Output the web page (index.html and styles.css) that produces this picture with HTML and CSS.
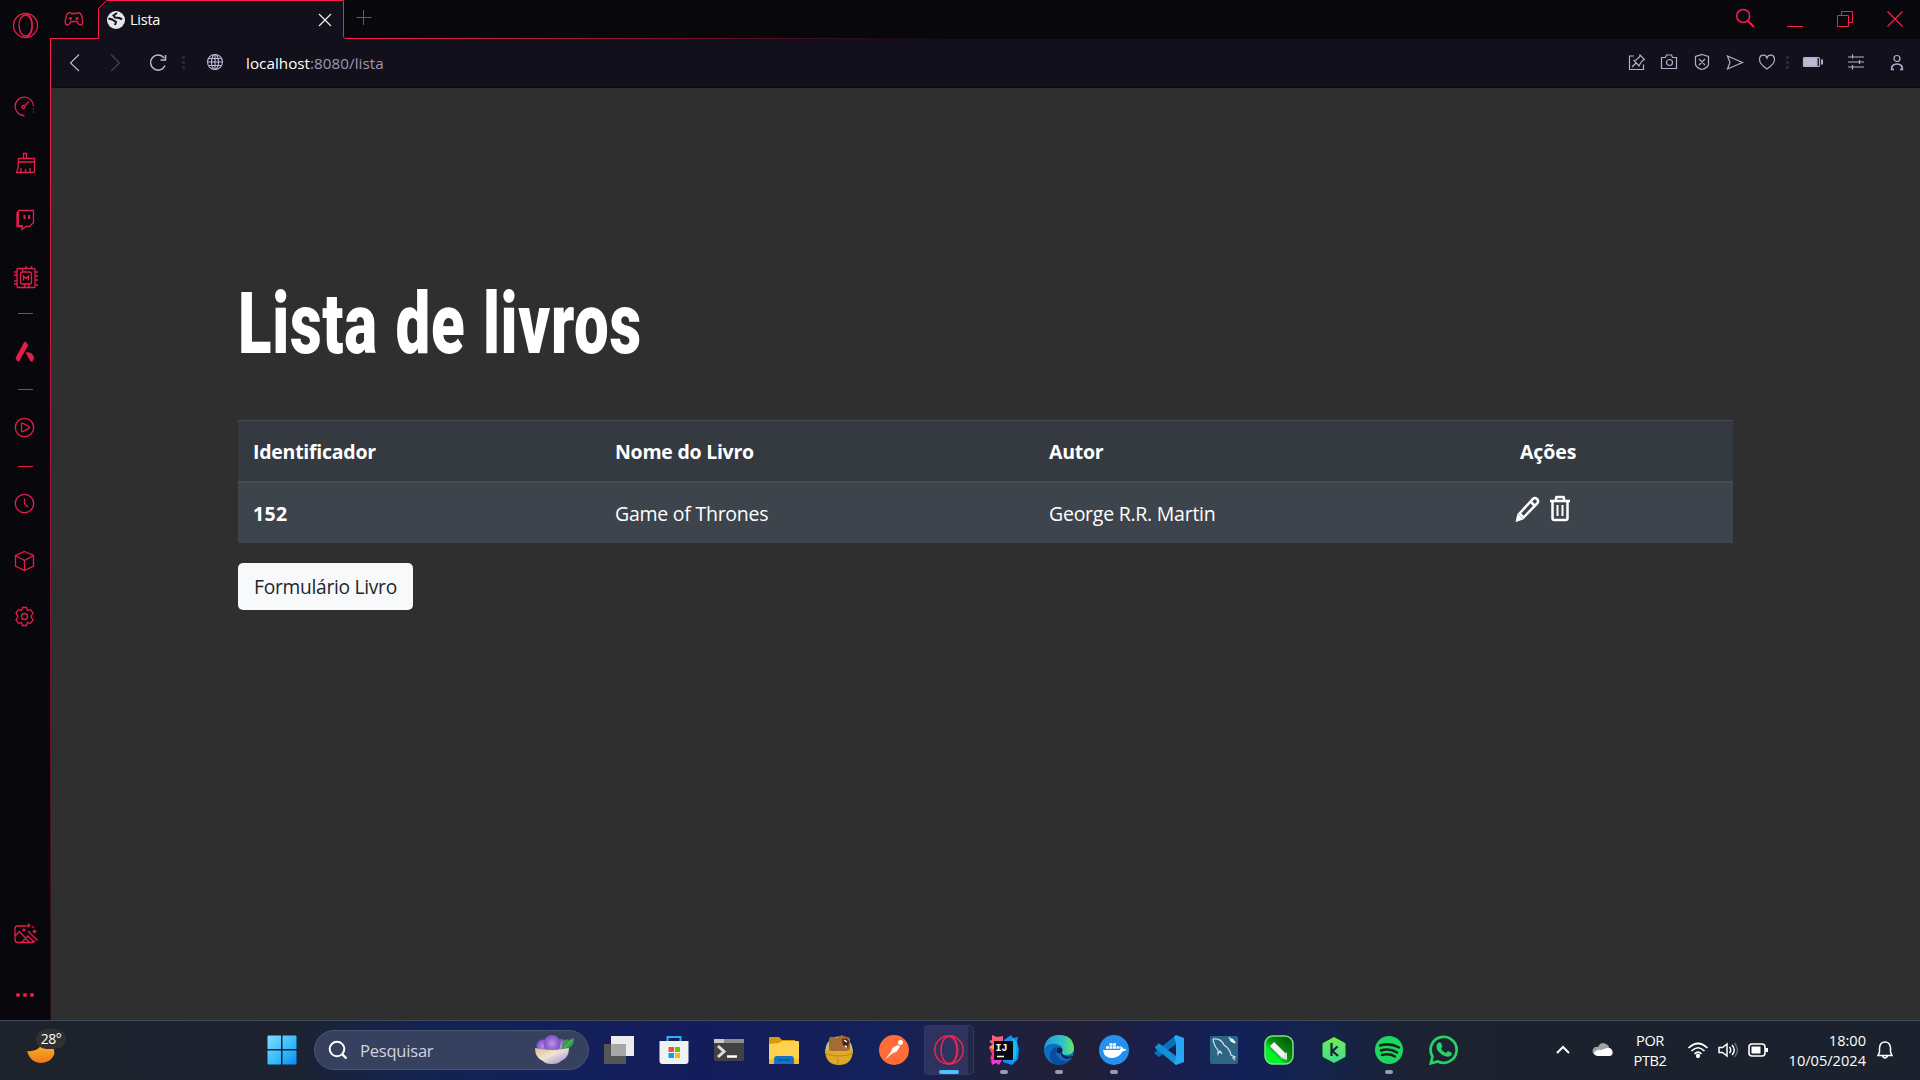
FILE: index.html
```html
<!DOCTYPE html>
<html lang="pt-BR">
<head>
<meta charset="utf-8">
<title>Lista</title>
<link rel="stylesheet" href="styles.css">
</head>
<body>
<div class="browser">
  <aside class="sidebar">
    <svg class="s-opera" viewBox="0 0 30 30"><circle cx="15.500" cy="15.500" r="12"/><ellipse cx="15.500" cy="15.500" rx="6.500" ry="10.500"/><path d="M17 4c7 3 7 20 0 23"/></svg>
    <svg class="s-speed" viewBox="0 0 30 30"><path d="M14.500 23.500A9.200 9.200 0 1 1 23.500 14"/><circle cx="13.500" cy="15" r="1.500"/><path d="M15 13.500l4-4M23.500 16.500v1M23.500 19.500v1"/></svg>
    <svg class="s-brush" viewBox="0 0 30 30"><path d="M13.500 9V4.500h3V9M8.500 9.500h16v13l-1 1h-17c2-4 2-7 2-14zM8.500 13h16M11 23v-4M15.500 23v-3M20 23v-4"/></svg>
    <svg class="s-twitch" viewBox="0 0 30 30"><path d="M7 9l2-2.500h14.500v12l-4 4H16l-4 3v-3H7z"/><path class="thick" d="M8 8v14h5M14.500 11v4M19 11v4"/></svg>
    <svg class="s-chip" viewBox="0 0 30 30"><rect x="7" y="6.500" width="18" height="19" rx="1"/><rect x="10.500" y="10" width="11" height="12" rx="2"/><path d="M13.500 18.500v-4.500l2.500 2.500 2.500-2.500v4.500M12.500 10V6.500M14.500 22v3M19 22v3M16 4v2M21.500 4v2M4 10h3M4 13h3M4 19h3M4 22h3M25 10h3M25 14h3M25 18h3M25 23h3"/></svg>
    <i class="dash d1"></i>
    <svg class="s-amd solid" viewBox="0 0 30 30"><path d="M14 5.500c.7-1 2-1 2.600 0l1.500 3L10 23c-.8 2-2.300 2-3.200.5L5.500 21zM15.500 15.500c5-1.500 8 2 8.800 5.500l-1.500 3c-.8 1.200-1.700 1-2.500 0z"/></svg>
    <i class="dash d2"></i>
    <svg class="s-play" viewBox="0 0 30 30"><circle cx="14.500" cy="15.500" r="9.200"/><path d="M11.500 12.200q0-1.500 1.500-.9l6 3.300q1 .9 0 1.800l-6 3.200q-1.500.4-1.500-1z"/></svg>
    <i class="dash d3"></i>
    <svg class="s-clock" viewBox="0 0 30 30"><circle cx="14.500" cy="15.500" r="9.200"/><path d="M14.500 10.500v5l3.500 3.500"/></svg>
    <svg class="s-cube" viewBox="0 0 30 30"><path d="M14.500 5.500l9 4v10.500l-9 4.500-9-4.500V9.500zM5.500 9.500l9 5 9-5M14.500 14.500v10"/></svg>
    <svg class="s-gear" viewBox="0 0 30 30"><circle cx="14.500" cy="15.500" r="3"/><path d="M12.500 6.500h4l1 3 3-.8 2.500 3.300-2 3.500 2 3.500-2.500 3.300-3-.8-1 3h-4l-1-3-3 .8L6 19l2-3.500L6 12l2.500-3.300 3 .8z"/></svg>
    <svg class="s-image" viewBox="0 0 30 30"><path d="M16 7H7.500Q5 7 5 9.500v11Q5 23.500 7.500 23.500h15q2 0 2-2M5 17l4.500-4.500 10 11M12 23l6-6 6 6M18 12l9.500 9.500M18.500 4.500v4M16.500 6.500h4M24.500 10.500v4M22.500 12.500h4M22 7.500l2 1"/><circle class="dot" cx="14" cy="11" r="1.600"/></svg>
    <svg class="s-more solid" viewBox="0 0 30 30"><circle cx="8" cy="15" r="2.100"/><circle cx="15" cy="15" r="2.100"/><circle cx="22" cy="15" r="2.100"/></svg>
  </aside>
  <div class="window">
    <header class="tabstrip">
      <svg class="pad" viewBox="0 0 24 24"><path d="M6.500 6q1-1 3 .5h5q2-1.500 3-.5 2 .5 3 6.500.8 5-1.500 5.500-2 .3-4-3.500H9Q7 18.300 5 18 2.700 17.500 3.500 12.500 4.500 6.500 6.500 6z"/><path d="M8.500 10v3M7 11.500h3M15 10v3M13.500 11.500h3"/></svg>
      <div class="tab">
        <svg class="fav" viewBox="0 0 18 18"><circle cx="9" cy="9" r="9" fill="#e4e6ec"/><path d="M10 2L6.500 4.500 8 6.500q5 0 7 2M1.500 7.500L5 8.500l4 2.500-1 3" fill="none" stroke="#14121b" stroke-width="2"/></svg>
        <span class="tab-title">Lista</span>
        <svg class="tab-close" viewBox="0 0 14 14"><path d="M1 1l12 12M13 1L1 13"/></svg>
      </div>
      <svg class="plus" viewBox="0 0 16 16"><path d="M.5 7.500h15M7.500 0v15"/></svg>
      <div class="controls">
        <svg viewBox="0 0 20 20"><circle cx="8.200" cy="8" r="6.500" stroke-width="1.500"/><path d="M13 13l6 6" stroke-width="1.800"/></svg>
        <svg viewBox="0 0 20 20"><path d="M2 18.500h16"/></svg>
        <svg viewBox="0 0 20 20"><path d="M2.500 7.500h11v11h-11zM6.500 7.500v-4h11v11h-4"/></svg>
        <svg viewBox="0 0 20 20"><path d="M2.500 3.500l15 15M17.500 3.500l-15 15" stroke-width="1.300"/></svg>
      </div>
    </header>
    <nav class="toolbar">
      <div class="nav-icons">
        <svg viewBox="0 0 20 20"><path d="M14 2.500L5.500 11l8.500 8"/></svg>
        <svg class="dim" viewBox="0 0 20 20"><path d="M6 2.500l8.500 8.500L6 19"/></svg>
        <svg class="reload" viewBox="0 0 20 20"><path d="M17 13.500a7.500 7.500 0 1 1-1-7.500M17.500 3v5h-5"/></svg>
        <i class="dots"></i>
        <svg viewBox="0 0 20 20"><circle cx="10" cy="10" r="7.500"/><ellipse cx="10" cy="10" rx="3.500" ry="7.500"/><path d="M3.500 6.500h13M3.500 13.500h13M2.500 10h15M10 2.500v15"/></svg>
      </div>
      <div class="url"><b>localhost</b>:8080/lista</div>
      <div class="tools">
        <svg viewBox="0 0 20 20"><path d="M7 4H2.500v13.500h14v-5M13 3l4.500 4.500-2 1-2.500 3.500-1 2-5-5.500 2-.5 3.500-3zM9 11l-4 4"/></svg>
        <svg viewBox="0 0 20 20"><path d="M2.500 5.500h4l1-2.500h5l1 2.500h4v11h-15z"/><circle cx="10.500" cy="10.500" r="3"/></svg>
        <svg viewBox="0 0 20 20"><path d="M10 2.500l6.500 2v8q-1 3.500-6.500 5-5.500-1.500-6.500-5v-8zM7 7l6 6M13 7l-6 6"/></svg>
        <svg viewBox="0 0 20 20"><path d="M2.500 4l15 6.500-15 6.500 2.500-6.500z"/></svg>
        <svg viewBox="0 0 20 20"><path d="M10 17Q2.500 12 2.500 7.500c0-5 6-6 7.500-1.500 1.500-4.500 7.500-3.500 7.500 1.500Q17.500 12 10 17z"/></svg>
        <i class="dots"></i>
        <svg class="wide" viewBox="0 0 24 20"><rect x="2.500" y="5.500" width="16" height="9" rx="1"/><path d="M3 6h13v8H3z" fill="#c1b8d8"/><path d="M21 7.500v5" stroke-width="2"/></svg>
        <svg viewBox="0 0 20 20"><path d="M2 5h16M2 10h16M2 15h16M6.500 2.500v4M13.500 8v4M6.500 13v4.500"/></svg>
        <svg viewBox="0 0 20 20"><circle cx="10" cy="6.500" r="3"/><path stroke-width="1.600" d="M4.500 17.500q0-5.500 5.500-5.500t5.500 5.500M4 17.500h3M13 17.500h3"/></svg>
      </div>
    </nav>
    <main class="page">
      <h1>Lista de livros</h1>
      <table class="books">
        <colgroup><col class="c-id"><col class="c-name"><col class="c-author"><col></colgroup>
        <thead><tr><th>Identificador</th><th>Nome do Livro</th><th>Autor</th><th class="act">Ações</th></tr></thead>
        <tbody><tr><th>152</th><td>Game of Thrones</td><td>George R.R. Martin</td>
          <td class="icons"><svg width="28" height="28" viewBox="0 0 28 28"><path d="M5.500 18.500L19 3.800q2-1.800 4 .2t.4 4.200L9.500 22.500zM16.500 6.500l4.500 4.500" fill="none" stroke="#fff" stroke-width="2.500"/><path d="M3.500 18.500l6 6L1.500 27z" fill="#fff"/></svg><svg width="22" height="28" viewBox="0 0 22 28"><path d="M1 6h20M3.500 6v17q0 2 2 2h11q2 0 2-2V6M7 6V3q0-1 1-1h6q1 0 1 1v3" fill="none" stroke="#fff" stroke-width="2.500"/><path d="M8.500 10v11M13.500 10v11" stroke="#fff" stroke-width="2"/></svg></td></tr></tbody>
      </table>
      <a class="button">Formulário Livro</a>
    </main>
  </div>
  <svg class="frame" width="1870" height="1020" viewBox="0 0 1870 1020">
    <defs>
      <linearGradient id="fx" gradientUnits="userSpaceOnUse" x1="0" y1="0" x2="900" y2="0"><stop offset=".35" stop-color="#fa1e4e"/><stop offset="1" stop-color="#fa1e4e" stop-opacity="0"/></linearGradient>
      <linearGradient id="fy" gradientUnits="userSpaceOnUse" x1="0" y1="38" x2="0" y2="1020"><stop offset="0" stop-color="#fa1e4e"/><stop offset=".3" stop-color="#fa1e4e" stop-opacity=".8"/><stop offset=".95" stop-color="#fa1e4e" stop-opacity=".15"/></linearGradient>
    </defs>
    <path d="M.5 38.500H48.500V8.500L56.500.5H293.500V37L295 38.500H900" fill="none" stroke="url(#fx)"/>
    <path d="M0 38h1v982H0z" fill="url(#fy)"/>
  </svg>
</div>
<footer class="taskbar">
  <div class="weather">
    <svg width="36" height="36" viewBox="0 0 36 36"><defs><linearGradient id="moon" x2="0" y2="1"><stop stop-color="#f8c52c"/><stop offset="1" stop-color="#f27818"/></linearGradient></defs><path d="M4 21q13 2 17-12 12 6 10 16Q27 33 17 33 7 32 4 21z" fill="url(#moon)"/></svg>
    <span>28°</span>
  </div>
  <svg class="start" width="30" height="30" viewBox="0 0 30 30"><defs><linearGradient id="win" x2="1" y2="1"><stop stop-color="#86dcfb"/><stop offset=".55" stop-color="#35bdfb"/><stop offset="1" stop-color="#058cf4"/></linearGradient></defs><path d="M1.500.5H14V14H.5V1.500q0-1 1-1zM15.500.5h13q1 0 1 1V14h-14zM.5 15.500H14v14H1.500q-1 0-1-1zM15.500 15.500h14v13q0 1-1 1h-13z" fill="url(#win)"/></svg>
  <div class="search">
    <svg width="20" height="20" viewBox="0 0 20 20"><circle cx="9" cy="9" r="7.300" fill="none" stroke="#fff" stroke-width="2"/><path d="M14 14l4.500 4.500" stroke="#fff" stroke-width="2.400"/></svg>
    <span>Pesquisar</span>
    <svg width="40" height="30" viewBox="0 0 40 30"><defs><linearGradient id="bowl" x2="1" y2="1"><stop stop-color="#d9bd8c"/><stop offset=".45" stop-color="#efe3d2"/><stop offset="1" stop-color="#9a83dd"/></linearGradient><radialGradient id="berry"><stop stop-color="#bb93e9"/><stop offset="1" stop-color="#7e50c0"/></radialGradient></defs><circle cx="8" cy="11" r="6.500" fill="url(#berry)"/><circle cx="26" cy="11" r="7" fill="url(#berry)"/><circle cx="17" cy="8.500" r="8.500" fill="url(#berry)"/><path d="M27 14q-1-9 6-10 0 8-6 10zM28 14q1-9 11-11 0 11-11 11z" fill="#3b9a4c"/><path d="M29 13l8-8" stroke="#6cc25e"/><path d="M0 13q17 4 34 0 0 10-8 13-2 3-9 3t-9-3Q0 23 0 13z" fill="url(#bowl)"/></svg>
  </div>
  <div class="apps">
    <span><svg viewBox="0 0 30 30"><path d="M0 9h22v20H0z" fill="#555653"/><path d="M7 1h23v20H7z" fill="#ececef"/><path d="M7 9h15v12H7z" fill="#a8a8aa"/></svg></span>
    <span><svg viewBox="0 0 30 30"><path d="M8.500 8V2h13v6" fill="none" stroke="#27b4f4" stroke-width="2"/><path d="M.5 6h29v20q0 3-3 3h-23q-3 0-3-3z" fill="#f1f2f4"/><path d="M9.500 12H15v5H9.500z" fill="#f25022"/><path d="M16 12h5v5h-5z" fill="#7fba00"/><path d="M9.500 18H15v5H9.500z" fill="#00a4ef"/><path d="M16 18h5v5h-5z" fill="#ffb900"/></svg></span>
    <span><svg viewBox="0 0 30 30"><rect x="0" y="4" width="30" height="22" rx="1.500" fill="#414243"/><path d="M0 4h30v4H0z" fill="#8d8d8e"/><path d="M0 4h10v4H0z" fill="#c9c9ca"/><path d="M4 11l6 5.500L4 22" fill="none" stroke="#ddd" stroke-width="3"/><path d="M13 21.500h10" stroke="#fff" stroke-width="2.500"/></svg></span>
    <span><svg viewBox="0 0 30 30"><path d="M0 3q0-1 1-1h9l3 3h13v8H0z" fill="#d99a08"/><path d="M0 9l10-1 3-2h16q1 0 1 1v22H0z" fill="#ffd151"/><path d="M0 24h30v5H0z" fill="#f5bd29"/><path d="M5 29v-5q0-3 3-3h14q3 0 3 3v5z" fill="#1475c4"/><path d="M9 25h12" stroke="#0a559b" stroke-width="1.500"/></svg></span>
    <span><svg viewBox="0 0 30 30"><circle cx="15" cy="15" r="13.500" fill="#b5c58c"/><path d="M5 16V5q0-4 4-3l4 1q3-4 7-2l6 2v13z" fill="#a66b32"/><path d="M18 4q6-2 7 3l-1 6-5-3z" fill="#4a211c"/><path d="M20 5l3 2M21 11l2 1" stroke="#fff" stroke-width="1.500"/><path d="M1 14q14 5 28 0 0 16-14 16T1 14z" fill="#dea927"/><path d="M2 19q13 4 26 0M14 23v6" stroke="#bd8417" fill="none"/></svg></span>
    <span><svg viewBox="0 0 30 30"><circle cx="15" cy="15" r="15" fill="#ff6c37"/><circle cx="21.500" cy="7.500" r="2.500" fill="#fff"/><path d="M19 10l2 1.500-3.500 5-4.500 2-6 5 5-6.500 1.500-4z" fill="#fff" stroke="#fbd5c7" stroke-width=".6"/></svg></span>
    <span class="active"><svg viewBox="0 0 30 30" fill="none" stroke="#e62750" stroke-width="1.500"><circle cx="15" cy="15" r="14.200"/><ellipse cx="15" cy="15" rx="8" ry="13.500"/><path d="M17 1.500c9 3 9 24 0 27"/></svg></span>
    <span class="run"><svg viewBox="0 0 30 30"><path d="M3 0l5 2 6-1v8H3l-3-3 3-1z" fill="#ff5a78"/><path d="M0 13l6-6v18l-5-1 2-5z" fill="#ff318c"/><path d="M0 12l6-4v7z" fill="#ffa23a"/><path d="M2 25l5-2 6 2-3 5-3-2-4 2z" fill="#e93fd0"/><path d="M15 5l7-5 2 3 5-1-1 5 2 7-1 10-6 6-9-3z" fill="#168cf5"/><path d="M23 3l5 4-1 16-4 4z" fill="#13c1ed"/><path d="M5 6h19v19H5z" fill="#090711"/><text x="6.500" y="15.500">IJ</text><path d="M8 21.500h7" stroke="#fff" stroke-width="1.500"/></svg></span>
    <span class="run"><svg viewBox="0 0 30 30"><defs><linearGradient id="ed" x2="1"><stop stop-color="#249cdd"/><stop offset=".6" stop-color="#2bc2ca"/><stop offset="1" stop-color="#6ce464"/></linearGradient></defs><circle cx="15" cy="15" r="15" fill="#116ebe"/><path d="M0 14Q2 0 15 0q14 0 15 13 0 7-8 7-5 0-4-3 2-7-6-8Q3 8 0 14z" fill="url(#ed)"/><path d="M12 14q-1 10 9 12 4 0 7-3-5 7-13 7-11-2-9-12 2-5 8-7z" fill="#0b4c9c"/><path d="M17 16q-1 6 5 8 3 0 7-2 0-1-1-1-3 1-6 0-4-1-5-5z" fill="#15205a"/><circle cx="15.500" cy="15.500" r="3" fill="#15204c"/></svg></span>
    <span class="run"><svg viewBox="0 0 30 30"><circle cx="15" cy="15" r="15" fill="#2391ed"/><path d="M4 15h17q1-2 0-4 3 1 3.500 3 1.500-.4 3 .3-1 2-4 2.200Q20 23 13 23 5 23 4 15z" fill="#fff"/><path d="M7 12.500h3M10.500 12.500h3M14 12.500h3M10.500 9.500h3M14 9.500h3M17.500 12.500h3" stroke="#fff" stroke-width="2.500"/></svg></span>
    <span><svg viewBox="0 0 30 30"><path d="M22 0v9L5 22l-4-3q-1-1 0-2z" fill="#0871b7"/><path d="M1 12l3-3q1-1 2 0l16 12v9L1 13z" fill="#168ed5"/><path d="M22 0l8 3v24l-8 3-2-2 2-5V8l-2-6z" fill="#29a7f3"/></svg></span>
    <span><svg viewBox="0 0 30 30"><rect x="1" y="1" width="28" height="28" rx="2" fill="#2d6585"/><path d="M4 4q8-1 11 6 6 4 7 10l4 2-2 1 2 2M4 4q1 7 5 11v4l2-3 2 3M20 2l2 4 4 2" fill="none" stroke="#d5e6ef" stroke-width="1.200"/><path d="M21 3l3 1 3 4-4-1z" fill="#fff"/></svg></span>
    <span><svg viewBox="0 0 30 30"><defs><linearGradient id="cg" x1="1" x2="0" y2="1"><stop stop-color="#004a00"/><stop offset=".5" stop-color="#089410"/><stop offset=".7" stop-color="#00f52f"/></linearGradient></defs><rect x="1" y="1" width="28" height="28" rx="8" fill="url(#cg)" stroke="#79e879" stroke-width="1.500"/><path d="M8 9l12 12" stroke="#f3f3f3" stroke-width="6"/><path d="M17 23l6 2V17z" fill="#ddd"/></svg></span>
    <span><svg viewBox="0 0 30 30"><defs><linearGradient id="kg" x2="0" y2="1"><stop stop-color="#71ed58"/><stop offset="1" stop-color="#3bdd93"/></linearGradient></defs><path d="M15 1.500l12 6.500v14l-12 6.500L3 22V8z" fill="url(#kg)" stroke="#142b25"/><path d="M12.500 8v13M18.500 11.500l-5 4.500 5.500 5" fill="none" stroke="#172130" stroke-width="2.200"/></svg></span>
    <span class="run"><svg viewBox="0 0 30 30"><circle cx="15" cy="15" r="14" fill="#1fd760"/><path d="M6 10.500q10-3 19 2M7 15.500q9-2.500 16 2M8 20q7-2 13 1.500" fill="none" stroke="#14251d" stroke-width="2.500" stroke-linecap="round"/></svg></span>
    <span><svg viewBox="0 0 30 30"><path d="M3.500 21.500A13 13 0 1 1 9 26.500L1.800 28.300z" fill="none" stroke="#25d366" stroke-width="2.700"/><path d="M9 8q2-1.500 3 0l1.500 3.500-1.500 2q1.500 3.500 5 4.500l2-2 3.500 1.500q1 2-1 3.500-3 2-8-1-6-4-6-8.500Q7.500 9 9 8z" fill="#25d366"/></svg></span>
  </div>
  <div class="tray">
    <svg width="20" height="20" viewBox="0 0 20 20"><path d="M4 13l6-6 6 6" fill="none" stroke="#fff" stroke-width="2"/></svg>
    <svg width="22" height="20" viewBox="0 0 22 20"><path d="M5 15Q0 13 2 9q2-3 5-2 3-6 8-3 3 1 3 4l-9 5z" fill="#9ea1a8"/><path d="M4 15q-3-2 1-4 2-2 5-1l6-2q3-1 5 2 2 5-2 6H6z" fill="#fff"/></svg>
    <div class="lang">POR<br>PTB2</div>
    <svg width="22" height="20" viewBox="0 0 22 20" fill="none" stroke="#fff" stroke-width="1.700"><path d="M1.500 8q9.500-9 19 0M4.500 11q6.500-6.500 13 0M7.500 14q3.500-3.500 7 0"/><circle cx="11" cy="16" r="1.300" fill="#fff"/></svg>
    <svg width="22" height="20" viewBox="0 0 22 20" fill="none" stroke="#fff" stroke-width="1.500"><path d="M2 7.500h3.500L10 4v12l-4.500-3.500H2zM12.500 7q2.500 3 0 6M15 5q4.500 5 0 10"/><path d="M17.500 3q6 7 0 14" stroke="#626772"/></svg>
    <svg width="22" height="20" viewBox="0 0 22 20"><rect x="2" y="4" width="16" height="12" rx="3" fill="none" stroke="#fff" stroke-width="1.600"/><path d="M4.500 6.500h9v7h-9zM18 8h3v4h-3z" fill="#fff"/></svg>
    <div class="clock">18:00<br>10/05/2024</div>
    <svg width="20" height="20" viewBox="0 0 20 20" fill="none" stroke="#fff" stroke-width="1.500"><path d="M4.500 12V8q.5-6 5.500-6t5.500 6v4l1.500 3.500H3zM7.500 16q2.500 4 5 0"/></svg>
  </div>
</footer>
</body>
</html>
```
FILE: styles.css
```css
* { box-sizing: border-box; }
body { margin: 0; width: 1920px; height: 1080px; overflow: hidden; display: flex; flex-direction: column; font-family: "Open Sans", "Noto Sans", sans-serif; background: #08080c; color: #fff; }
svg { display: block; flex: none; }
.browser { height: 1020px; display: flex; position: relative; }
.frame { position: absolute; left: 50px; top: 0; pointer-events: none; }

.sidebar { width: 51px; padding: 10px 0 10px 10px; display: flex; flex-direction: column; background: #08080c; }
.sidebar svg { width: 30px; height: 30px; fill: none; stroke: #e51d49; stroke-width: 1.3; }
.sidebar .solid, .sidebar .dot { fill: #e51d49; stroke: none; }
.sidebar .thick { stroke-width: 2; }
.sidebar .s-speed { margin-top: 52px; }
.s-brush { margin-top: 27px; }
.s-twitch { margin-top: 25px; }
.s-chip { margin-top: 28px; }
.s-amd { margin-top: 23px; }
.s-play { margin-top: 22px; }
.s-clock { margin-top: 21px; }
.s-cube { margin-top: 28px; }
.s-gear { margin-top: 25px; }
.s-image { margin-top: auto; }
.s-more { margin-top: 31px; }
.dash { flex: none; width: 15px; height: 1px; margin-left: 8px; background: #e51d49; }
.d1 { margin-top: 21px; }
.d2 { margin-top: 22px; }
.d3 { margin-top: 24px; }

.window { flex: 1; display: flex; flex-direction: column; }
.tabstrip { height: 39px; display: flex; background: #08080c; }
.pad { width: 24px; height: 24px; margin: 7px 12px 0 11px; fill: none; stroke: #e51d49; stroke-width: 1.4; }
.tab { width: 245px; padding: 0 11px 0 9px; display: flex; align-items: center; background: #12101a; clip-path: polygon(0 8px, 8px 0, 100% 0, 100% 100%, 0 100%); }
.fav { width: 18px; height: 18px; }
.tab-title { flex: 1; margin-left: 5px; font-size: 14.5px; letter-spacing: -.25px; }
.tab-close { width: 14px; height: 14px; stroke: #f0f0f0; stroke-width: 1.2; }
.plus { width: 16px; height: 16px; margin: 10px 0 0 13px; stroke: #e51d49; }
.controls { margin: 8px 15px 0 auto; display: flex; gap: 30px; fill: none; stroke: #fa1e4e; }
.controls svg { width: 20px; height: 20px; }

.toolbar { height: 49px; padding: 0 13px 2px 14px; display: flex; align-items: center; background: #12101a; border-bottom: 1px solid #0c0b12; }
.nav-icons { display: flex; gap: 20px; align-items: center; width: 160px; fill: none; stroke: #c1b8d8; stroke-width: 1.1; }
.nav-icons .reload { margin: 0 -6px 0 3px; stroke-width: 1.5; }
.toolbar svg { width: 20px; height: 20px; }
.toolbar .dim { opacity: .3; }
.toolbar .wide { width: 24px; }
.dots { width: 3px; height: 13px; background: repeating-linear-gradient(#29263a 0 3px, transparent 3px 5px); }
.url { margin-left: 21px; padding-top: 2px; flex: 1; font-size: 15.2px; color: #9f97b8; letter-spacing: .05px; }
.url b { color: #fff; font-weight: 400; }
.tools { display: grid; grid-template-columns: 32px 33px 33px 32px 29px 15px 45px 41px 20px; align-items: center; fill: none; stroke: #b7aecb; stroke-width: 1.2; }

.page { flex: 1; padding: 188px 187px 0; background: #2f2f2f; font-size: 19.5px; }
h1 { margin: 0; height: 144px; font: 900 85px/97px Roboto, sans-serif; letter-spacing: 1px; word-spacing: 2px; transform: scaleX(.727); transform-origin: 0 0; white-space: nowrap; }
.books { width: 1495px; table-layout: fixed; border-collapse: separate; border-spacing: 0; text-align: left; background: #343a40; border-top: 1px solid #454d55; letter-spacing: -.25px; }
.c-id { width: 362px; }
.c-name { width: 434px; }
.c-author { width: 465px; }
.books th, .books td { height: 60px; padding: 2px 15px 0; line-height: 30px; }
.books thead th { height: 62px; padding-top: 1px; border-bottom: 2px solid #454d55; }
.books tbody { background: #3e444c; }
.books .act { padding-left: 21px; letter-spacing: -.1px; }
.books tbody th { letter-spacing: .3px; }
.books .icons { display: flex; gap: 7px; padding: 12px 0 0 15px; }
.button { display: block; width: 175px; height: 47px; margin-top: 20px; border-radius: 5px; background: #f8f9fa; color: #212529; line-height: 48px; text-align: center; font-size: 19.2px; letter-spacing: -.28px; }

.taskbar { height: 60px; padding-bottom: 1px; display: flex; align-items: center; border-top: 1px solid #434955; background: linear-gradient(90deg, #1d222b 0, #1c2330 290px, #15234e 400px, #12205b 560px, #141d5c 700px, #14215a 880px, #1d203f 980px, #211f38 1080px, #191f4c 1160px, #122158 1240px, #15234c 1320px, #1c2233 1410px, #1c222d 1500px, #1c222d); }
.weather { position: relative; width: 267px; height: 58px; }
.weather svg { margin: 9px 0 0 23px; }
.weather span { position: absolute; left: 36px; top: 8px; width: 30px; height: 20px; border-radius: 10px; background: #30302f; font-size: 14px; line-height: 20px; text-align: center; letter-spacing: -.5px; }
.search { width: 275px; height: 40px; margin-left: 17px; padding: 0 13px 0 13px; display: flex; align-items: center; border-radius: 20px; background: #36415f; border: 1px solid #4c5572; }
.search span { flex: 1; margin-left: 12px; font-size: 16.5px; color: #d0d3de; letter-spacing: -.2px; }
.apps { margin-left: 2px; display: flex; }
.apps span { position: relative; width: 55px; height: 50px; display: grid; place-items: center; }
.apps svg { width: 30px; height: 30px; }
.apps text { fill: #fff; font: bold 10px "Liberation Mono", monospace; }
.apps .active { background: linear-gradient(#292c59, #292c59) 3px 0 / 44px 50px no-repeat; }
.apps .active::before { content: ""; position: absolute; inset: 0 2px 0 3px; border: 1px solid #343867; border-radius: 5px; background: #ffffff08; }
.apps .active svg { z-index: 1; }
.apps .run::after, .apps .active::after { content: ""; position: absolute; left: 24px; bottom: 1px; width: 8px; height: 4px; border-radius: 2px; background: #9a9cab; }
.apps .active::after { left: 18px; width: 20px; background: #4cc2ff; }
.tray { margin-left: auto; padding-right: 25px; display: flex; align-items: center; font-size: 14.6px; line-height: 20px; letter-spacing: 0; }
.tray > svg:nth-child(2) { margin: 0 19px 0 18px; }
.lang { width: 36px; text-align: center; letter-spacing: -.4px; }
.tray > svg:nth-child(4) { margin-left: 19px; }
.tray > svg:nth-child(5), .tray > svg:nth-child(6) { margin-left: 8px; }
.clock { width: 97px; text-align: right; margin-right: 9px; padding-bottom: 1px; white-space: nowrap; }
```
